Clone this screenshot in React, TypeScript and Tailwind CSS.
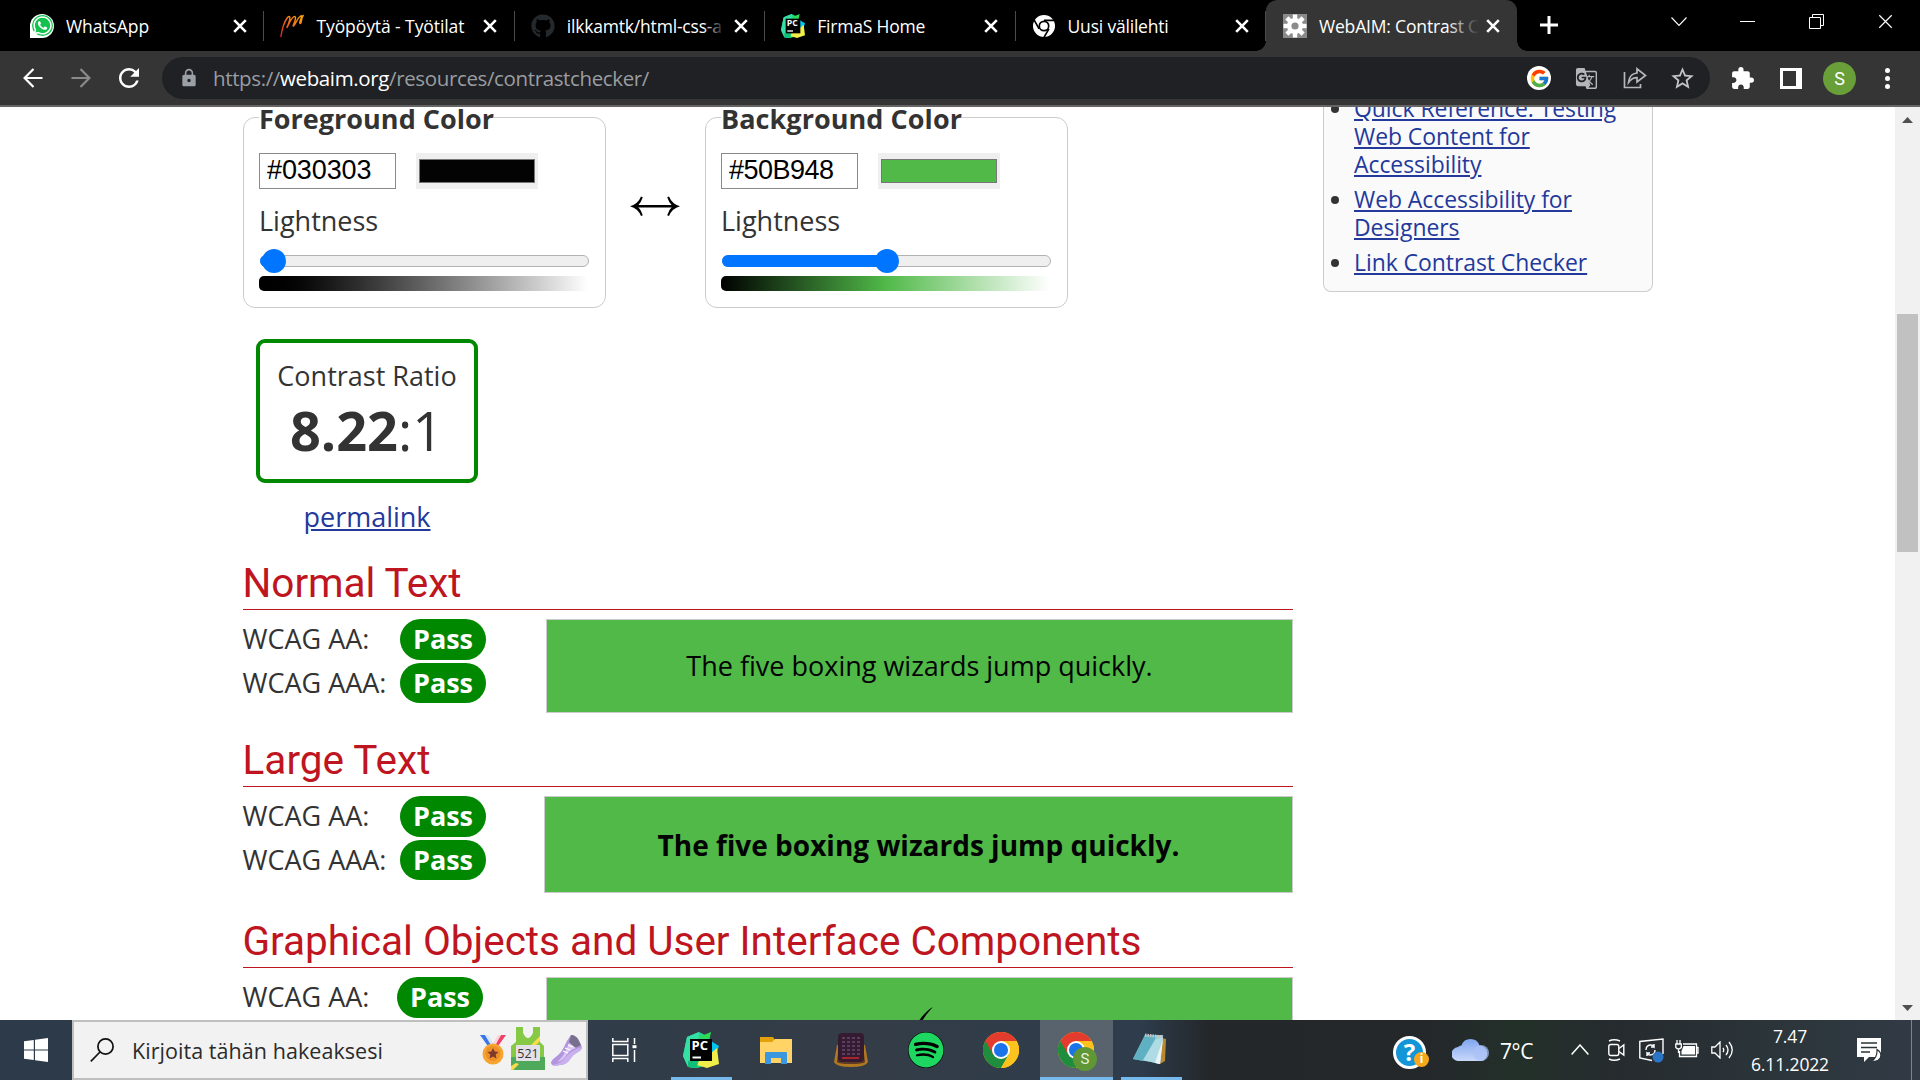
import React, { useLayoutEffect, useRef } from "react";
import { FaGithub, FaSpotify, FaWhatsapp } from "react-icons/fa";
import { FcGoogle } from "react-icons/fc";
import { MdExtension, MdGTranslate, MdLock, MdStarBorder, MdRefresh } from "react-icons/md";

/** Text whose tracking is adjusted so that it spans a given width. */
function Fit({ w, className = "", children }: { w: number; className?: string; children: React.ReactNode }) {
  const ref = useRef<HTMLSpanElement>(null);
  useLayoutEffect(() => {
    const el = ref.current;
    if (!el) return;
    el.style.letterSpacing = "0px";
    const n = (el.textContent || "").length;
    const natural = el.getBoundingClientRect().width;
    el.style.letterSpacing = `${(w - natural) / n}px`;
  }, [w]);
  return (
    <span ref={ref} className={`inline-block whitespace-pre ${className}`}>
      {children}
    </span>
  );
}

function CloseX({ size = 14, thick = 2.6 }: { size?: number; thick?: number }) {
  return (
    <svg width={size} height={size} viewBox="0 0 14 14" className="block">
      <path d="M1.2 1.2 12.8 12.8M12.8 1.2 1.2 12.8" stroke="#fff" strokeWidth={thick} fill="none" />
    </svg>
  );
}

function PyCharm({ size }: { size: number }) {
  return (
    <svg width={size} height={size} viewBox="0 0 36 36" className="block">
      <path d="M4 5 16 0l8 4 5 8v20L14 36 5 35 0 24z" fill="#21d789" />
      <path d="M4 5 16 0l-2 36-9-1L0 24z" fill="#36dfa4" />
      <path d="M28 0 16 5l10 5z" fill="#2bdc55" />
      <path d="m28 9 8 5-3 9-5-1z" fill="#07c3f2" />
      <path d="M27 22 34 16l2 16-12 4-10-3 4-8z" fill="#f1ee4a" />
      <path d="M5 29l10-1-1 8-9-1z" fill="#12bf78" />
      <rect x="7" y="7" width="22" height="22" fill="#000" />
      <text
        x="8.6"
        y="18"
        fontSize="12"
        fontWeight="700"
        fontFamily="Open Sans, sans-serif"
        fill="#fff"
        textLength="16.5"
        lengthAdjust="spacingAndGlyphs"
      >
        PC
      </text>
      <rect x="9.5" y="24.5" width="8.5" height="2" fill="#fff" />
    </svg>
  );
}

function Chrome({ size }: { size: number }) {
  return (
    <svg width={size} height={size} viewBox="0 0 48 48" className="block">
      <circle cx="24" cy="24" r="24" fill="#fbbc05" />
      <path d="M24 24 3.2 12A24 24 0 0 0 24 48l10.4-18z" fill="#1e8e3e" />
      <path d="M3.2 12A24 24 0 0 1 44.8 12H24L13.6 30z" fill="#e33b2e" />
      <path d="M44.800 12A24 24 0 0 1 24 48l10.400-18L34 12z" fill="#fcc31e" />
      <circle cx="24" cy="24" r="12" fill="#fff" />
      <circle cx="24" cy="24" r="9.400" fill="#1a73e8" />
    </svg>
  );
}

function ChromeMono() {
  return (
    <svg width="24" height="24" viewBox="0 0 24 24" className="block">
      <circle cx="12" cy="12" r="11" fill="#fff" />
      <circle cx="12" cy="12" r="4.7" fill="#fff" stroke="#000" strokeWidth="1.7" />
      <path d="M12 6.4h10M7.1 14.8 2.2 6.2M16.9 14.8 12 23.3" stroke="#000" strokeWidth="1.7" />
    </svg>
  );
}

function MoodleM() {
  return (
    <svg width="24" height="24" viewBox="0 0 24 24" className="block">
      <defs>
        <linearGradient id="m" x1="1" y1="0" x2="0" y2="1">
          <stop offset="0" stopColor="#ffb000" />
          <stop offset=".5" stopColor="#f26a1b" />
          <stop offset="1" stopColor="#d8232a" />
        </linearGradient>
      </defs>
      <path
        d="M.8 23C2 15 4 8 7.500 3.500c3-3 3 1 1 6-1 3-2 4-1.500 4 1-1 3-8 6.500-10.500 2.500-1.500 2.500 1 1 5-1 3-2 4-1 4 2-1 3-7 6.500-9.500 2-1.500 2-.5 1 2-1 2.500-2 5-.5 5C22 8 21 4 23.500 1"
        stroke="url(#m)"
        strokeWidth="1.400"
        fill="none"
      />
    </svg>
  );
}

const tabs = [
  {
    icon: (
      <span className="flex size-6 items-center justify-center rounded-full rounded-bl-md bg-white">
        <span className="flex size-[21px] items-center justify-center rounded-full bg-[#12c24c]">
          <FaWhatsapp size={21} color="#fff" />
        </span>
      </span>
    ),
    label: "WhatsApp",
    w: 83,
  },
  { icon: <MoodleM />, label: "Työpöytä - Työtilat", w: 148 },
  { icon: <FaGithub size={24} color="#24292e" />, label: "ilkkamtk/html-css-a", w: 155, fade: true },
  { icon: <PyCharm size={24} />, label: "FirmaS Home", w: 108 },
  { icon: <ChromeMono />, label: "Uusi välilehti", w: 101 },
];

function TabStrip() {
  return (
    <div className="flex h-[51px] shrink-0 bg-black pl-[14px]">
      {tabs.map((t) => (
        <div key={t.label} className="flex h-[51px] w-[250.4px] shrink-0 items-center pl-4">
          <span className="block size-6">{t.icon}</span>
          <span className="relative ml-3 w-[156px] overflow-hidden text-[17.5px] leading-[26px] text-white">
            <Fit w={t.w}>{t.label}</Fit>
            {t.fade && <span className="absolute inset-y-0 right-0 w-5 bg-gradient-to-r from-transparent to-black/90" />}
          </span>
          <span className="ml-[11px]">
            <CloseX />
          </span>
          <span className="ml-auto h-[30px] w-px bg-[#4b4b4b]" />
        </div>
      ))}
      <div className="relative flex h-[51px] w-[251px] shrink-0 items-center rounded-t-[11px] bg-[#353535] pl-[17px]">
        <span className="absolute -left-[10px] bottom-0 size-[10px] bg-[radial-gradient(circle_at_0_0,black_9.500px,#353535_10px)]" />
        <span className="absolute -right-[10px] bottom-0 size-[10px] bg-[radial-gradient(circle_at_100%_0,black_9.500px,#353535_10px)]" />
        <span className="flex size-6 items-center justify-center bg-[#8b8b8b]">
          <svg width="24" height="24" viewBox="0 0 24 24">
            <g fill="#fff">
              <circle cx="12" cy="12" r="8" />
              {[0, 45, 90, 135].map((a) => (
                <rect key={a} x="9.800" y="0.500" width="4.400" height="23" transform={`rotate(${a} 12 12)`} />
              ))}
            </g>
            <circle cx="12" cy="12" r="3.600" fill="#8b8b8b" />
          </svg>
        </span>
        <span className="relative ml-3 w-[160px] overflow-hidden text-[17.5px] leading-[26px] text-white">
          <Fit w={160}>WebAIM: Contrast C</Fit>
          <span className="absolute inset-y-0 right-0 w-8 bg-gradient-to-r from-transparent to-[#353535]" />
        </span>
        <span className="ml-[7px]">
          <CloseX />
        </span>
      </div>
      <svg width="18" height="18" className="ml-[23px] mt-4 shrink-0" viewBox="0 0 18 18">
        <path d="M9 0v18M0 9h18" stroke="#fff" strokeWidth="3" />
      </svg>
      <svg width="16" height="10" className="ml-[113px] mt-[17px] shrink-0" viewBox="0 0 16 10">
        <path d="M.5.5 8 8.500 15.500.5" stroke="#fff" strokeWidth="1.100" fill="none" />
      </svg>
      <span className="ml-[53px] mt-[21px] h-px w-[15px] shrink-0 bg-white" />
      <svg width="16" height="16" className="ml-[54px] mt-[14px] shrink-0" viewBox="0 0 16 16">
        <path d="M.5 3.500h11v11h-11zM3.500 3.500v-3h11v11h-3" stroke="#fff" fill="none" />
      </svg>
      <span className="ml-[53px] mt-[14px]">
        <CloseX size={15} thick={1.1} />
      </span>
    </div>
  );
}

function Toolbar() {
  return (
    <div className="flex h-[56px] shrink-0 items-center border-b-2 border-[#656565] bg-[#353535]">
      <svg width="20" height="20" viewBox="0 0 20 20" className="ml-[23px] shrink-0">
        <path d="M19.500 10H2M10.500 1 1.600 10l8.900 9" stroke="#fff" strokeWidth="2.200" fill="none" />
      </svg>
      <svg width="20" height="20" viewBox="0 0 20 20" className="ml-[28px] shrink-0">
        <path d="M.5 10H18M9.500 1l8.900 9-8.900 9" stroke="#8a8a8a" strokeWidth="2.200" fill="none" />
      </svg>
      <MdRefresh size={30} color="#fff" className="ml-[23px] shrink-0" />
      <div className="ml-[18px] flex h-[42px] w-[1548px] shrink-0 items-center rounded-full bg-[#202124] pl-[17px]">
        <MdLock size={20} color="#9aa0a6" className="shrink-0" />
        <span className="ml-[14px] text-[20.5px] leading-[28px] text-[#9a9da1]">
          <Fit w={436}>
            https://<span className="text-white">webaim.org</span>/resources/contrastchecker/
          </Fit>
        </span>
        <span className="ml-auto flex size-6 items-center justify-center rounded-full bg-white">
          <FcGoogle size={21} />
        </span>
        <MdGTranslate size={23} color="#b5b6b8" className="ml-6 shrink-0" />
        <svg width="24" height="22" viewBox="0 0 24 22" className="ml-[25px] shrink-0">
          <path
            d="M1.500 5v15.500h16V17M5.500 15.500C6 9.500 9 6.500 14 6V1.800L22.500 8.500 14 15v-4.300c-3.500 0-6 1.300-8.500 4.800z"
            stroke="#b5b6b8"
            strokeWidth="1.700"
            fill="none"
          />
        </svg>
        <MdStarBorder size={27} color="#c3c4c6" className="ml-[22px] mr-[14px] shrink-0" />
      </div>
      <MdExtension size={25} color="#fff" className="ml-[20px] shrink-0" />
      <span className="ml-[25px] flex h-[21px] w-[22px] shrink-0 justify-end border-[3px] border-r-0 border-white">
        <span className="w-[6px] bg-white" />
      </span>
      <span className="ml-[21px] flex size-[33px] shrink-0 items-center justify-center rounded-full bg-[#689f38] font-['Roboto'] text-[18px] text-white">
        S
      </span>
      <span className="ml-[29px] flex flex-col gap-[3px]">
        <i className="block size-[5px] rounded-full bg-white" />
        <i className="block size-[5px] rounded-full bg-white" />
        <i className="block size-[5px] rounded-full bg-white" />
      </span>
    </div>
  );
}

function ColorPanel(p: {
  title: string;
  tw: number;
  hex: string;
  swatch: string;
  fill: string;
  bar: string;
  thumb: string;
}) {
  return (
    <div className="flex h-[191px] w-[363px] shrink-0 flex-col items-start rounded-[12px] border border-[#ccc] pl-[15px]">
      <div className="-mt-[17px] h-9 bg-white font-bold leading-9">
        <Fit w={p.tw}>{p.title}</Fit>
      </div>
      <div className="mt-4 flex">
        <div className="h-9 w-[137px] border border-[#8a8a8a] pl-[7px] font-['Liberation_Sans'] leading-[33px] text-black">
          <Fit w={104.4}>{p.hex}</Fit>
        </div>
        <div className="ml-5 h-9 w-[122px] bg-[#efefef] px-[3px] py-[6px]">
          <div className={`h-6 border border-[#777] ${p.swatch}`} />
        </div>
      </div>
      <div className="mt-[14px] h-9 leading-9">Lightness</div>
      <div className="relative ml-px mt-4 h-3 w-[329px] rounded-full border border-[#b2b2b2] bg-[#efefef]">
        <div className={`absolute -left-px -top-px h-3 rounded-full bg-[#0075ff] ${p.fill}`} />
        <div className={`absolute -top-[7px] size-6 rounded-full bg-[#0075ff] ${p.thumb}`} />
      </div>
      <div className={`mt-[9px] h-[15px] w-[329px] rounded-[5px] ${p.bar}`} />
    </div>
  );
}

function Verdict({ label, labelW = "w-[157px]" }: { label: string; labelW?: string }) {
  return (
    <div className="flex h-[43.500px]">
      <span className={`-ml-[0.500px] leading-[39px] ${labelW}`}>{label}</span>
      <span className="h-[40.500px] w-[86px] rounded-full bg-[#080] pl-px text-center font-bold leading-[39px] text-white">
        Pass
      </span>
    </div>
  );
}

function Heading({ className, w, children }: { className: string; w: number; children: string }) {
  return (
    <h2
      className={`h-[51px] border-b border-[#be1520] font-['Roboto'] text-[40.5px] leading-[48px] text-[#be1520] ${className}`}
    >
      <Fit w={w} className="-ml-[0.500px]">{children}</Fit>
    </h2>
  );
}

function MainColumn() {
  return (
    <main className="ml-[243px] w-[1050px] shrink-0 pt-[10px]">
      <div className="flex items-start">
        <ColorPanel
          title="Foreground Color"
          tw={235}
          hex="#030303"
          swatch="bg-[#030303]"
          fill="w-4"
          thumb="left-px"
          bar="bg-gradient-to-r from-black to-white"
        />
        <svg width="50" height="20" viewBox="0 0 50 20" className="ml-6 mt-[79px] shrink-0">
          <path d="M4 10.300h42" stroke="#000" strokeWidth="2.400" />
          <path d="M0 10.300Q8 8 11 .5l1.800.8Q11 7 7.500 10.300 11 13.600 12.800 19.200L11 20Q8 12.600 0 10.300z" />
          <path d="M50 10.300Q42 8 39 .5l-1.800.8Q39 7 42.500 10.300 39 13.600 37.200 19.200L39 20Q42 12.600 50 10.300z" />
        </svg>
        <div className="w-[25px] shrink-0" />
        <ColorPanel
          title="Background Color"
          tw={241}
          hex="#50B948"
          swatch="bg-[#50b948]"
          fill="w-[165px]"
          thumb="left-[152px]"
          bar="bg-[linear-gradient(to_right,#000,#50b948_50%,#fff)]"
        />
      </div>

      <div className="ml-[13px] mt-[31px] flex w-[222px] flex-col items-center">
        <div className="h-36 w-[222px] rounded-[9px] border-4 border-[#080] text-center">
          <div className="mt-[14.500px] leading-9">Contrast Ratio</div>
          <div className="mt-[4px] pr-px text-[54px] leading-[64px]">
            <b>8.22</b>:1
          </div>
        </div>
        <a className="mt-4 leading-9 text-[#23399b] underline">permalink</a>
      </div>

      <Heading className="mt-[24px]" w={219}>Normal Text</Heading>
      <div className="mt-[9px] flex h-[94px] justify-between">
        <div>
          <Verdict label="WCAG AA:" />
          <Verdict label="WCAG AAA:" />
        </div>
        <div className="w-[747px] border border-[#ccc] bg-[#50b948] text-center leading-[92px] text-[#030303]">
          The five boxing wizards jump quickly.
        </div>
      </div>

      <Heading className="mt-[23px]" w={188}>Large Text</Heading>
      <div className="mt-[9px] flex h-[97px] justify-between">
        <div>
          <Verdict label="WCAG AA:" />
          <Verdict label="WCAG AAA:" />
        </div>
        <div className="w-[749px] border border-[#ccc] bg-[#50b948] text-center text-[28px] font-bold leading-[97px] text-[#030303]">
          The five boxing wizards jump quickly.
        </div>
      </div>

      <Heading className="mt-[24px]" w={899}>Graphical Objects and User Interface Components</Heading>
      <div className="mt-[9px] flex h-[97px] justify-between">
        <Verdict label="WCAG AA:" labelW="w-[154px]" />
        <div className="w-[747px] border border-[#ccc] bg-[#50b948]">
          <svg width="30" height="40" viewBox="0 0 30 40" className="ml-[356px] mt-[29px]">
            <path d="M2 22 6 20l3 7C14 15 21 5 30 0 22 8 15 19 11 33H8z" fill="#030303" />
          </svg>
        </div>
      </div>
    </main>
  );
}

function Sidebar() {
  return (
    <aside className="ml-[30px] h-[185px] w-[330px] shrink-0 rounded-b-[8px] border border-t-0 border-[#ccc] bg-[#fafafa] pl-[30px] pr-4">
      <ul className="-mt-[13px] flex flex-col gap-[7px] text-[22.95px] leading-7 tracking-[-0.050px] text-[#23399b]">
        {["Quick Reference: Testing Web Content for Accessibility", "Web Accessibility for Designers", "Link Contrast Checker"].map((t) => (
          <li key={t} className="relative">
            <span className="absolute -left-[23px] top-[10.500px] size-2 rounded-full bg-[#333]" />
            <a className="underline">{t}</a>
          </li>
        ))}
      </ul>
    </aside>
  );
}

function Taskbar() {
  return (
    <div className="flex h-[60px] shrink-0 items-center bg-[linear-gradient(to_right,#2d3a49_0,#303c49_590px,#343d47_860px,#2e3c4c_1140px,#23272a_1210px,#24282b_1430px,#233029_1520px,#262b2f_1620px,#2b353a_1780px,#323b46_1920px)] text-white">
      <svg width="24" height="24" viewBox="0 0 24 24" className="ml-6 shrink-0">
        <path d="M0 3.300 9.800 2v9.400H0zM11 1.800 24 0v11.400H11zM0 12.600h9.800V22L0 20.700zM11 12.600h13V24l-13-1.800z" fill="#fff" />
      </svg>
      <div className="ml-6 flex h-[60px] w-[516px] shrink-0 items-center border-2 border-[#bfbfbf] bg-[#f2f2f2] text-[#2b2b2b]">
        <svg width="24" height="24" viewBox="0 0 24 24" className="ml-4 shrink-0">
          <circle cx="15.500" cy="8.500" r="7.600" stroke="#111" strokeWidth="1.700" fill="none" />
          <path d="M10 14 .8 23.400" stroke="#111" strokeWidth="1.700" />
        </svg>
        <span className="ml-[18px] mt-[3px] w-[250px] shrink-0 text-[21.500px]">
          <Fit w={251}>Kirjoita tähän hakeaksesi</Fit>
        </span>
        <svg width="26" height="30" viewBox="0 0 26 30" className="ml-[98px] shrink-0">
          <path d="M0 0h5l8 11-3 3z" fill="#3a76e8" />
          <path d="M5 0h3l6 9-2 3z" fill="#d9e7fb" />
          <path d="M26 0h-5l-8 11 3 3z" fill="#ee4266" />
          <path d="M21 0h-3l-5 8 2 3z" fill="#fbd5dc" />
          <circle cx="13" cy="19" r="10.500" fill="#f7a531" />
          <circle cx="13" cy="18.500" r="7.500" fill="#ee8f28" />
          <path d="m13 13 1.700 3.500 3.800.5-2.800 2.600.7 3.900L13 21.600l-3.400 1.900.7-3.900L7.500 17l3.800-.5z" fill="#7c3b2a" />
        </svg>
        <svg width="34" height="43" viewBox="0 0 34 43" className="-mt-[3px] ml-[5px] shrink-0">
          <path d="M5 0h7v6q5 10 10 0V0h7v15l4 4v24H0V19l5-4z" fill="#86c944" />
          <path d="M0 30h34v13H0z" fill="#4fa95a" />
          <path d="m29 9-9 9h5l4-4zM0 43v-4l5-3 3 1-6 6z" fill="#fbdb4a" />
          <rect x="5" y="18" width="24" height="16" rx="1" fill="#e4e0e8" />
          <text x="17" y="30.500" fontSize="12.500" textAnchor="middle" fontFamily="Open Sans, sans-serif" fill="#333">521</text>
        </svg>
        <svg width="31" height="31" viewBox="0 0 31 31" className="ml-[6px] shrink-0">
          <path d="M20 0q4 0 7 4l4 8q0 3-4 5-4 2-7 6-4 7-11 7-8 2-9-2 0-3 6-7 5-4 7-9 3-7 7-12z" fill="#b394de" />
          <path d="M20 0q4 0 7 4l3 6-6 3-6-6 2-7z" fill="#77708c" />
          <path d="M18 8l7 5q-7 2-11 9-3 4-8 5 6-5 8-10z" fill="#d9caf4" />
          <path d="M31 12q0 3-4 5-4 2-7 6-4 7-11 7-5 1-8 0 8-1 12-6 5-8 18-12z" fill="#c9b1ee" />
          <path d="m14 13 5 2M12 16l5 2M17 10l5 2" stroke="#fff" strokeWidth="1.200" />
        </svg>
      </div>
      <svg width="26" height="24" viewBox="0 0 26 24" className="ml-6 shrink-0" stroke="#fff" strokeWidth="1.500" fill="none">
        <path d="M.8 0v3.500h15V0M.8 24v-3.500h15V24M.8 6.500h15v11h-15zM22.500 0v6M22.500 12v12" />
        <path d="M20.500 8.700h4" strokeWidth="3" />
      </svg>
      <div className="relative ml-[33px] flex h-[60px] w-[61px] shrink-0 items-center justify-center border-b-[3px] border-[#76b9ed] pr-0.5 pt-[3px]">
        <PyCharm size={36} />
      </div>
      <svg width="32" height="27" viewBox="0 0 32 27" className="ml-7 shrink-0">
        <path d="M0 0h13l2 3v4H0z" fill="#e3a008" />
        <path d="M0 5h12l3-3h17v24H0z" fill="#ffd365" />
        <path d="M5 27V16q0-1 1-1h20q1 0 1 1v11h-6v-6H11v6z" fill="#3b97de" />
      </svg>
      <svg width="34" height="34" viewBox="0 0 34 34" className="ml-[42px] shrink-0">
        <path d="M3 12h28l3 17q-2 5-17 5T0 29z" fill="#b07820" />
        <path d="M5 12h24l2 17q-2 2-14 2T3 29z" fill="#5c3a26" />
        <rect x="4" y="0" width="26" height="29" rx="4" fill="#351b30" />
        <g fill="#5b3d63">
          {[4, 8, 12, 16, 20].map((y) =>
            [8, 13, 18, 23].map((x) => <rect key={`${x}-${y}`} x={x} y={y} width="3" height="2" />)
          )}
        </g>
        <path d="M8 25h17" stroke="#a3262f" strokeWidth="2" />
      </svg>
      <span className="ml-[40px] flex size-9 shrink-0 items-center justify-center rounded-full bg-black">
        <FaSpotify size={36} color="#1ed760" />
      </span>
      <span className="ml-[39px] shrink-0">
        <Chrome size={36} />
      </span>
      <div className="relative ml-[21px] flex h-[60px] w-[73px] shrink-0 items-center justify-center border-b-[3px] border-[#76b9ed] bg-[#59636e] pr-px pt-[3px]">
        <Chrome size={36} />
        <span className="absolute left-[33px] top-[27px] flex size-6 items-center justify-center rounded-full bg-[#5f9636] font-['Roboto'] text-[15px] text-[#e8f2dc]">
          S
        </span>
      </div>
      <div className="ml-2 flex h-[60px] w-[61px] shrink-0 items-center justify-center border-b-[3px] border-[#76b9ed] pr-1 pt-px">
        <svg width="34" height="32" viewBox="0 0 34 32">
          <path d="M29 5l4 1-1 22-5 3z" fill="#b98a2e" />
          <path d="M12 2h18l-3 29-9-2L0 26z" fill="#8ecbd8" />
          <path d="M12 2h12L10 28 0 26z" fill="#5fb0c2" />
          <path d="M23 6 10 27l17 4 3-27z" fill="#aedbe4" />
          <path d="M30 6 22 30l5 1z" fill="#eef3f4" />
          <path d="M12 2l18 2" stroke="#c9c9c9" strokeWidth="3" strokeDasharray="1.500 1" />
        </svg>
      </div>
      <div className="relative ml-[211px] mt-1 flex size-[33px] shrink-0 items-center justify-center rounded-full border-[3px] border-white bg-[#1296d8] text-[24px] font-bold leading-none">
        ?
        <span className="absolute -bottom-[1px] -right-[6px] flex size-[15px] items-center justify-center rounded-full bg-[#f5a81c] text-[12px] leading-none">
          i
        </span>
      </div>
      <svg width="37" height="24" viewBox="0 0 37 24" className="-mt-[3px] ml-[26px] shrink-0">
        <defs>
          <linearGradient id="cl" x1="0" y1="0" x2="0" y2="1">
            <stop offset="0" stopColor="#7fa5ee" />
            <stop offset="1" stopColor="#c9d8fb" />
          </linearGradient>
        </defs>
        <path d="M7 24a7 7 0 0 1-1-14Q8 8 9.500 8.500A9.500 9.500 0 0 1 27.500 8.500 8 8 0 0 1 30 24z" fill="url(#cl)" />
        <circle cx="29" cy="16" r="8" fill="#a9c1f6" opacity=".7" />
      </svg>
      <span className="ml-[11px] mt-[3px] w-[34px] shrink-0 text-[21px]">
        <Fit w={33}>7°C</Fit>
      </span>
      <svg width="18" height="11" viewBox="0 0 18 11" className="-mt-px ml-[37px] shrink-0">
        <path d="M.6 10.500 9 1l8.400 9.500" stroke="#fff" strokeWidth="1.500" fill="none" />
      </svg>
      <svg width="17" height="22" viewBox="0 0 17 22" className="ml-[19px] shrink-0" stroke="#fff" strokeWidth="1.400" fill="none">
        <rect x=".8" y="5.500" width="10" height="11" rx="2" />
        <path d="M11 9.500 15.800 6v10L11 12.500M1 2q5-2.500 11 0M1 20q5 2.500 11 0" />
      </svg>
      <svg width="26" height="25" viewBox="0 0 26 25" className="ml-[14px] shrink-0" stroke="#fff" strokeWidth="1.400" fill="none">
        <path d="M13 22.500.8 20V3.500L24 1v15M7 12q0-5 5-5 2 0 3 1.500V6m0 3h-3M16 12q0 5-5 5-2 0-3-1.500V18m0-3h3" />
        <circle cx="19" cy="19" r="5.500" fill="#2c74c4" stroke="none" />
      </svg>
      <svg width="24" height="18" viewBox="0 0 24 18" className="-mt-[2px] ml-[10px] shrink-0" stroke="#fff" strokeWidth="1.300" fill="none">
        <path d="M8 4h13.500v12.500h-17V11M21.500 7.500H23v5.500h-1.500M.8 4h5.500v3.500Q3.500 10.500.8 7.500zM2 4V0M5 4V0M3.500 9.500V13" />
        <path d="M8.500 6H20v8.500H6.500V11z" fill="#fff" stroke="none" />
      </svg>
      <svg width="24" height="18" viewBox="0 0 24 18" className="ml-[12px] shrink-0" stroke="#fff" strokeWidth="1.300" fill="none">
        <path d="M.8 6H4l5-5v16l-5-5H.8zM12 7q1.500 2 0 4M15 4q4 5 0 10M18 1q6.500 8 0 16" />
      </svg>
      <div className="-mt-[1px] ml-[16px] flex w-[78px] shrink-0 flex-col items-center text-[17.5px] leading-[28px]">
        <Fit w={34}>7.47</Fit>
        <Fit w={78}>6.11.2022</Fit>
      </div>
      <svg width="25" height="25" viewBox="0 0 25 25" className="ml-[28px] shrink-0">
        <path d="M0 0h24v19H12l-5 5v-5H0z" fill="#fff" />
        <path d="M4 5h16M4 9.500h16M4 14h9" stroke="#2b343a" strokeWidth="1.500" />
        <path d="M20 11.500q5 3 3.500 8-3 5-9 3.500 6-3 5.500-11.500z" fill="#fff" stroke="#2b343a" strokeWidth="1.200" />
      </svg>
      <span className="ml-[29px] h-full w-px shrink-0 bg-[#7d8388]" />
    </div>
  );
}

export default function App() {
  return (
    <div className="flex h-[1080px] w-[1920px] flex-col overflow-hidden bg-white font-['Open_Sans',sans-serif]">
      <TabStrip />
      <Toolbar />
      <div className="flex h-[913px] shrink-0 items-start overflow-hidden text-[27px] text-[#333]">
        <MainColumn />
        <Sidebar />
        <div className="ml-auto flex h-[913px] w-[25px] shrink-0 flex-col items-center bg-[#f1f1f1]">
          <svg width="11" height="6" viewBox="0 0 11 6" className="mt-[10px]">
            <path d="M0 6 5.500 0 11 6z" fill="#505050" />
          </svg>
          <div className="mt-[191px] h-[238px] w-[21px] bg-[#c1c1c1]" />
          <svg width="11" height="6" viewBox="0 0 11 6" className="mb-[9px] mt-auto">
            <path d="M0 0 5.500 6 11 0z" fill="#505050" />
          </svg>
        </div>
      </div>
      <Taskbar />
    </div>
  );
}
